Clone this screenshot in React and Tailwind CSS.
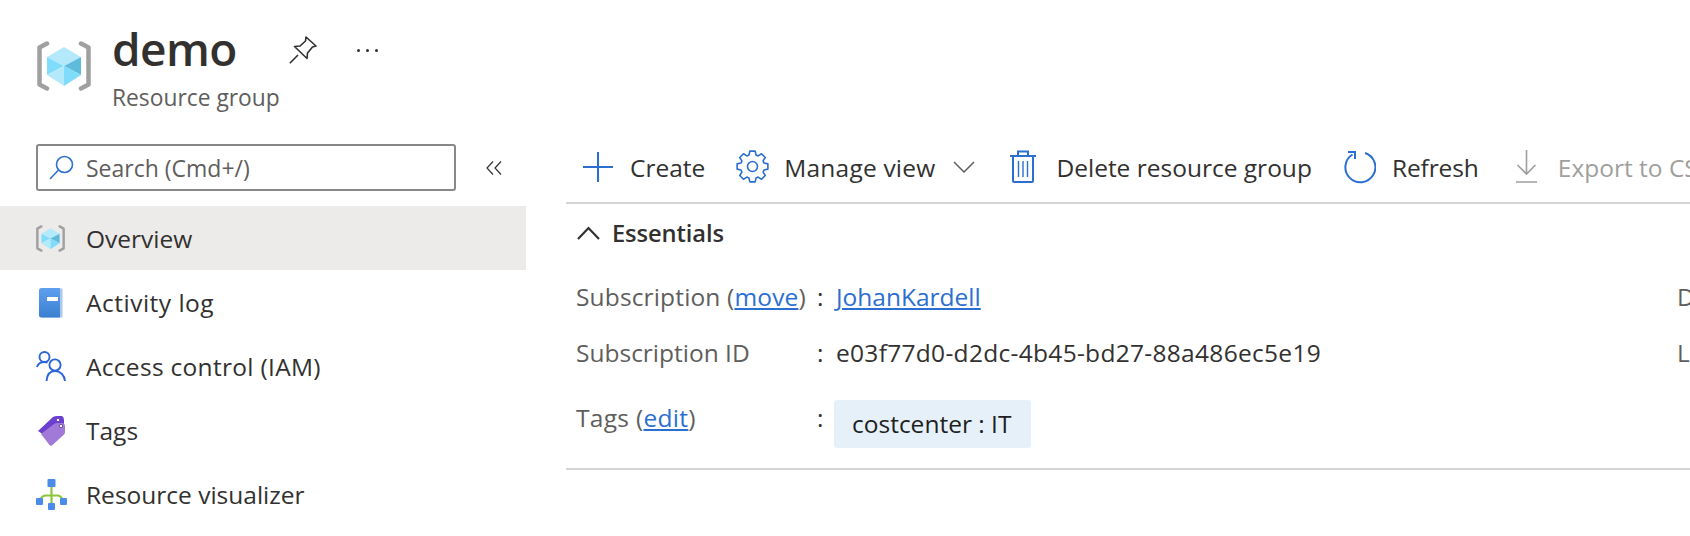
const blue = '#2b6fd1';

// 8 tooth cog outline, centred on 16.5,16.5
function gearPath() {
    const pt = (r, a) => `${(16.5 + r * Math.cos(a)).toFixed(2)} ${(16.5 + r * Math.sin(a)).toFixed(2)}`;
    let d = '';
    for (let i = 0; i < 8; i++) {
        const a = (i * Math.PI) / 4 - Math.PI / 2;
        d += `${i === 0 ? 'M' : 'L'}${pt(12, a - 0.3)} L${pt(15.6, a - 0.17)} L${pt(15.6, a + 0.17)} L${pt(12, a + 0.3)} `;
    }
    return d + 'Z';
}

function GroupIcon({ className }) {
    return (
        <svg viewBox="0 0 54 50" className={className}>
            <path d="M10 2.5 L2.5 6.5 V43.5 L10 47.5" fill="none" stroke="#a0a0a0" strokeWidth="4.5" strokeLinecap="round" strokeLinejoin="round" />
            <path d="M44 2.5 L51.5 6.5 V43.5 L44 47.5" fill="none" stroke="#a0a0a0" strokeWidth="4.5" strokeLinecap="round" strokeLinejoin="round" />
            <path d="M27 6 L44 16 L27 25 L10 16 Z" fill="#b4e9fb" />
            <path d="M10 16 L27 25 L10 34 Z" fill="#80dcfb" />
            <path d="M44 16 V34 L27 25 Z" fill="#5fbbdb" />
            <path d="M10 34 L27 25 V45 Z" fill="#b4e9fb" />
            <path d="M44 34 L27 45 V25 Z" fill="#80dcfb" />
        </svg>
    );
}

function BookIcon() {
    return (
        <svg viewBox="0 0 24 30" className="w-[24px] h-[30px] ml-[3px] mt-[1px]">
            <defs>
                <linearGradient id="book" x1="0" y1="0" x2="0" y2="1">
                    <stop offset="0" stopColor="#5ea0ef" />
                    <stop offset="1" stopColor="#3b7fd0" />
                </linearGradient>
            </defs>
            <path d="M3 .5 H23.5 V29.5 H3 A2.5 2.5 0 0 1 .5 27 V3 A2.5 2.5 0 0 1 3 .5 Z" fill="#a9c9ee" />
            <path d="M2.5 0 H21 V29.5 H2.5 A2.5 2.5 0 0 1 0 27 V2.5 A2.5 2.5 0 0 1 2.5 0 Z" fill="url(#book)" />
            <rect x="8" y="9" width="11" height="4" fill="#fff" />
        </svg>
    );
}

function PeopleIcon() {
    return (
        <svg viewBox="0 0 30 30" className="w-[30px] h-[30px]" fill="none" stroke="#2a66d9" strokeWidth="1.9">
            <circle cx="8.5" cy="6" r="5" />
            <path d="M1 16 C2 12.5 5 11 8.5 11 C9.5 11 10.5 11.2 11.5 11.6" />
            <circle cx="19" cy="14" r="5.6" />
            <path d="M10.5 30 C11 24 14 20 19 20 C24 20 28.5 24 29 30" />
        </svg>
    );
}

function TagsIcon() {
    return (
        <svg viewBox="0 0 28 30" className="w-[28px] h-[30px] ml-[2px] mt-[2px]">
            <path d="M0 15 L15 1 Q17 0 19 0 L24 0 Q26 1 26 4 L26 9 L6 19 Z" fill="#6d3fd0" />
            <path d="M3 18 L16 8 Q18 6.5 20 7 L25 7 Q27 8 27 10 L27 16 Q27 17.5 26 18.5 L14 29.5 Q12.5 30 11.5 29 Z" fill="#a07ad6" />
            <circle cx="20" cy="4" r="1.7" fill="#fff" stroke="#4c2aa0" strokeWidth=".7" />
            <circle cx="23" cy="10" r="1.7" fill="#fff" stroke="#4c2aa0" strokeWidth=".7" />
        </svg>
    );
}

function VisualizerIcon() {
    return (
        <svg viewBox="0 0 31 31" className="w-[31px] h-[31px]">
            <path d="M15.5 7 V24 M4 21 Q6 16.5 10 16.5 H21 Q25 16.5 27 21" fill="none" stroke="#8cc63f" strokeWidth="2.2" />
            <rect x="11.5" y="0" width="8" height="8" rx="1" fill="#4a8ce8" />
            <rect x="0" y="19" width="7" height="7" rx="1" fill="#4a8ce8" />
            <rect x="24" y="19" width="7" height="7" rx="1" fill="#4a8ce8" />
            <rect x="12" y="24" width="7" height="7" rx="1" fill="#4a8ce8" />
        </svg>
    );
}

function SideItem({ icon, label, active, textClass = '' }) {
    return (
        <div className={`flex items-center h-[64px] pl-[36px] ${active ? 'bg-[#edebe9]' : ''}`}>
            <div className="w-[50px] flex items-center">{icon}</div>
            <span className={`text-[#323130] pt-[2px] ${textClass}`}>{label}</span>
        </div>
    );
}

function ToolItem({ icon, label, className, muted, textClass = '' }) {
    return (
        <div className={`flex items-center shrink-0 ${className}`}>
            {icon}
            <span className={`pt-[2px] ${textClass} ${muted ? 'text-[#a19f9d]' : 'text-[#323130]'}`}>{label}</span>
        </div>
    );
}

function Link({ children }) {
    return <span className="text-[#2b6fd1] underline underline-offset-2">{children}</span>;
}

export default function App() {
    return (
        <div className="w-[1690px] h-[536px] overflow-hidden bg-white text-[24.5px] leading-[32px] font-['Open_Sans','Noto_Sans',sans-serif]">
            <header className="flex h-[131px] pl-[37px] pt-[24px]">
                <GroupIcon className="w-[54px] h-[50px] mt-[17px]" />
                <div className="ml-[21px]">
                    <h1 className="text-[46px] leading-[48px] font-semibold text-[#323130] tracking-[-0.6px]">demo</h1>
                    <p className="text-[#605e5c] text-[22.8px] mt-[10px]">Resource group</p>
                </div>
                <svg viewBox="0 0 28 28" className="w-[28px] h-[28px] ml-[9px] mt-[12px]" fill="none" stroke="#323130" strokeWidth="1.6" strokeLinejoin="round">
                    <path d="M.8 27.2 L9 19 M17 1 L27 10 L23.5 11 L18.5 17 L18 22.5 L5.5 10.5 L11 10 L16.5 5 Z" />
                </svg>
                <div className="flex gap-[6px] ml-[40px] mt-[25px] h-[3px]">
                    <span className="w-[3px] h-[3px] rounded-full bg-[#323130]" />
                    <span className="w-[3px] h-[3px] rounded-full bg-[#323130]" />
                    <span className="w-[3px] h-[3px] rounded-full bg-[#323130]" />
                </div>
            </header>

            <div className="flex">
                <aside className="w-[526px] shrink-0 pt-[13px]">
                    <div className="flex items-center pl-[36px]">
                        <div className="flex items-center w-[420px] h-[47px] border-2 border-[#8a8886] rounded-[3px] pl-[11px]">
                            <svg viewBox="0 0 25 25" className="w-[25px] h-[25px] mr-[12px]" fill="none" stroke={blue} strokeWidth="1.6">
                                <circle cx="15.5" cy="9.5" r="8" />
                                <path d="M9.5 15 L1 24" />
                            </svg>
                            <span className="text-[#605e5c] text-[23px]">Search (Cmd+/)</span>
                        </div>
                        <svg viewBox="0 0 16 14" className="w-[16px] h-[14px] ml-[30px]" fill="none" stroke="#323130" strokeWidth="1.2">
                            <path d="M7 .5 L1 7 L7 13.5 M15 .5 L9 7 L15 13.5" />
                        </svg>
                    </div>
                    <div className="mt-[15px]">
                        <SideItem active label="Overview" icon={<GroupIcon className="w-[29px] h-[27px]" />} />
                        <SideItem label="Activity log" textClass="tracking-[0.5px]" icon={<BookIcon />} />
                        <SideItem label="Access control (IAM)" textClass="tracking-[0.3px]" icon={<PeopleIcon />} />
                        <SideItem label="Tags" icon={<TagsIcon />} />
                        <SideItem label="Resource visualizer" icon={<VisualizerIcon />} />
                    </div>
                </aside>

                <main className="flex-1 min-w-0 ml-[40px] overflow-hidden">
                    <div className="flex items-center h-[73px] border-b-2 border-[#d6d5d4] pl-[17px]">
                        <ToolItem
                            label="Create"
                            icon={
                                <svg viewBox="0 0 30 30" className="w-[30px] h-[30px] mr-[17px]" stroke={blue} strokeWidth="2">
                                    <path d="M15 0 V30 M0 15 H30" />
                                </svg>
                            }
                        />
                        <ToolItem
                            label="Manage view"
                            textClass="tracking-[0.2px]"
                            className="ml-[31px]"
                            icon={
                                <svg viewBox="0 0 33 33" className="w-[33px] h-[33px] mr-[15px]" fill="none" stroke={blue} strokeWidth="1.6" strokeLinejoin="round">
                                    <path d={gearPath()} />
                                    <circle cx="16.5" cy="16.5" r="5" />
                                </svg>
                            }
                        />
                        <svg viewBox="0 0 22 12" className="w-[22px] h-[12px] ml-[18px] shrink-0" fill="none" stroke="#605e5c" strokeWidth="1.5">
                            <path d="M1 1 L11 11 L21 1" />
                        </svg>
                        <ToolItem
                            label="Delete resource group"
                            className="ml-[35px]"
                            icon={
                                <svg viewBox="0 0 26 33" className="w-[26px] h-[33px] mr-[20px]" fill="none" stroke={blue} strokeWidth="2">
                                    <path d="M0 6 H26 M8 6 V1.5 H18 V6 M3 6 V31 Q3 32 4 32 H22 Q23 32 23 31 V6" />
                                    <path d="M8.5 11 V27 M13 11 V27 M17.5 11 V27" strokeWidth="1.4" />
                                </svg>
                            }
                        />
                        <ToolItem
                            label="Refresh"
                            className="ml-[32px]"
                            textClass="tracking-[-0.1px]"
                            icon={
                                <svg viewBox="0 0 32 34" className="w-[32px] h-[34px] mr-[16px]" fill="none" stroke={blue} strokeWidth="2">
                                    <path d="M21 3 A15 15 0 1 1 8.5 4.5" />
                                    <path d="M4 2 H11 V9" />
                                </svg>
                            }
                        />
                        <ToolItem
                            muted
                            label="Export to CSV"
                            className="ml-[37px]"
                            icon={
                                <svg viewBox="0 0 21 33" className="w-[21px] h-[33px] mr-[21px]" fill="none" stroke="#a19f9d" strokeWidth="1.6">
                                    <path d="M10.5 0 V24 M1.5 15 L10.5 24 L19.5 15 M0 32 H21" />
                                </svg>
                            }
                        />
                    </div>

                    <div className="border-b-2 border-[#d6d5d4] pb-[20px]">
                        <div className="flex items-center h-[58px] pl-[11px]">
                            <svg viewBox="0 0 23 14" className="w-[23px] h-[14px] mr-[12px]" fill="none" stroke="#323130" strokeWidth="2.2">
                                <path d="M1 13 L11.5 2 L22 13" />
                            </svg>
                            <span className="font-semibold text-[23.7px] text-[#323130] tracking-[-0.1px]">Essentials</span>
                        </div>
                        <div className="grid grid-cols-[241px_19px_841px_40px] pl-[10px] mt-[7px] auto-rows-[56px] items-center text-[#605e5c]">
                            <div className="tracking-[0.15px]">Subscription (<Link>move</Link>)</div>
                            <div className="text-[#323130]">:</div>
                            <div><Link>JohanKardell</Link></div>
                            <div>Deployments</div>

                            <div>Subscription ID</div>
                            <div className="text-[#323130]">:</div>
                            <div className="text-[#323130] tracking-[0.3px]">e03f77d0-d2dc-4b45-bd27-88a486ec5e19</div>
                            <div>Location</div>

                            <div className="self-start pt-[21px] tracking-[0.3px]">Tags (<Link>edit</Link>)</div>
                            <div className="self-start pt-[21px] text-[#323130]">:</div>
                            <div className="self-start pt-[19px]">
                                <span className="inline-flex items-center h-[48px] w-[197px] pl-[18px] -ml-[2px] bg-[#e6f0f9] rounded-[3px] text-[#201f1e]">costcenter : IT</span>
                            </div>
                        </div>
                        <div className="h-[11px]" />
                    </div>
                </main>
            </div>
        </div>
    );
}
